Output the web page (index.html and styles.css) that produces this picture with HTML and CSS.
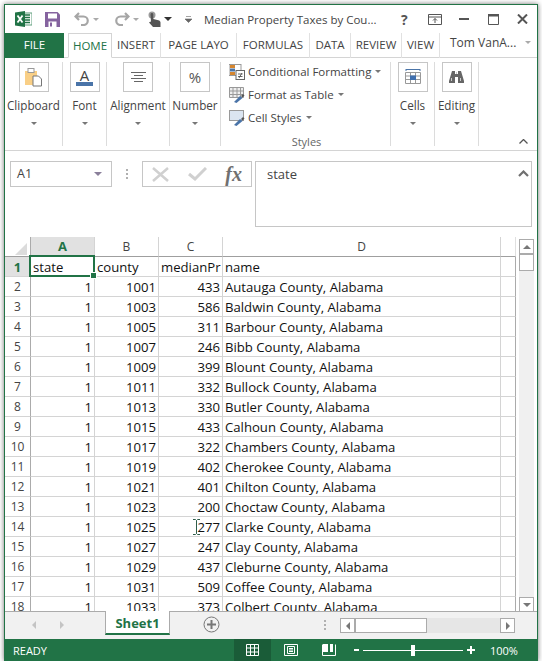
FILE: index.html
```html
<!DOCTYPE html>
<html>
<head>
    <title>Median Property Taxes by County</title>
    <meta charset="utf-8">
    <link rel="stylesheet" href="styles.css">
</head>

<body>
<div class="window">

    <!-- title bar -->
    <div class="titlebar">
        <svg class="qa logo" width="17" height="16" viewBox="0 0 17 16">
            <rect x="6" y="2" width="11" height="12" fill="#fff" stroke="#5f9e7c"/>
            <path d="M10 4h5M10 6.500h5M10 9h5M10 11.500h5" stroke="#217346" stroke-width="1.500"/>
            <path d="M0 1.500 10 0v16L0 14.500z" fill="#217346"/>
            <path d="M2.500 4.500 7.500 11.500M7.500 4.500 2.500 11.500" stroke="#fff" stroke-width="1.800"/>
        </svg>
        <svg class="qa save" width="15" height="15" viewBox="0 0 15 15">
            <path d="M0 0h12.500L15 2.500V15H0z" fill="#85639f"/>
            <rect x="3" y="1.500" width="9" height="5" fill="#fff"/>
            <rect x="3.500" y="9.500" width="8" height="5.500" fill="#fff"/>
            <rect x="5" y="10.500" width="2" height="4" fill="#85639f"/>
        </svg>
        <svg class="qa undo" width="16" height="14" viewBox="0 0 16 14">
            <path d="M5 1 1.500 4.500 5 8M2 4.500h7.500a4.200 4.200 0 0 1 0 8.500H7" fill="none" stroke="#a6a6a6" stroke-width="2.200"/>
        </svg>
        <span class="tiny-arrow light undo-arrow"></span>
        <svg class="qa redo" width="16" height="14" viewBox="0 0 16 14">
            <path d="M11 1l3.500 3.500L11 8M14 4.500H6.500a4.200 4.200 0 0 0 0 8.500H9" fill="none" stroke="#a6a6a6" stroke-width="2.200"/>
        </svg>
        <span class="tiny-arrow light redo-arrow"></span>
        <svg class="qa touch" width="13" height="16" viewBox="0 0 13 16">
            <circle cx="4" cy="4" r="3.500" fill="#9a9a9a"/>
            <path d="M2.500 3.500a1.300 1.300 0 0 1 2.800 0V8l5 1.200c1.500.4 2.200 1.200 2.200 2.300V16H5L1 11.500l1.500-1L3 11z" fill="#555"/>
        </svg>
        <span class="tiny-arrow dark touch-arrow"></span>
        <svg class="qa custom" width="7" height="7" viewBox="0 0 7 7">
            <path d="M1 0.500h5M0 3h7L3.500 6.500z" fill="#666" stroke="#666" stroke-width="0.600"/>
        </svg>
        <span class="doc-title">Median Property Taxes by Cou...</span>
        <span class="help">?</span>
        <svg class="qa display" width="14" height="11" viewBox="0 0 14 11">
            <path d="M.5.500h13v10H.500zM.5 3h13" fill="none" stroke="#555"/>
            <path d="M7 9V4.500M5 6.500l2-2 2 2" fill="none" stroke="#555"/>
        </svg>
        <svg class="qa minimize" width="10" height="2" viewBox="0 0 10 2"><rect width="10" height="2" fill="#555"/></svg>
        <svg class="qa maximize" width="11" height="11" viewBox="0 0 11 11">
            <path d="M.5 2h10v8.500H.500z" fill="none" stroke="#555"/><rect width="11" height="2" fill="#555"/>
        </svg>
        <svg class="qa close" width="11" height="10" viewBox="0 0 11 10">
            <path d="M1 .5l9 9M10 .5l-9 9" stroke="#555" stroke-width="2"/>
        </svg>
    </div>

    <!-- ribbon tabs -->
    <div class="tabs">
        <div class="tab tab-file">FILE</div>
        <div class="tab tab-home">HOME</div>
        <div class="tab w-insert">INSERT</div>
        <div class="tab w-page">PAGE LAYO</div>
        <div class="tab w-formulas">FORMULAS</div>
        <div class="tab w-data">DATA</div>
        <div class="tab w-review">REVIEW</div>
        <div class="tab w-view">VIEW</div>
        <div class="account">Tom VanA...<span class="tiny-arrow light"></span></div>
    </div>

    <!-- ribbon -->
    <div class="ribbon">
        <div class="group g-clipboard">
            <div class="big-icon">
                <svg width="17" height="19" viewBox="0 0 17 19">
                    <rect x="0" y="3" width="12" height="14" fill="#f9cf86"/>
                    <rect x="3" y="0.500" width="6" height="4" fill="#fff" stroke="#999"/>
                    <path d="M8 8h5.500L16.500 11v7H8z" fill="#fff" stroke="#777"/>
                </svg>
            </div>
            <div class="group-name">Clipboard</div>
            <span class="tiny-arrow mid"></span>
        </div>
        <div class="group g-font">
            <div class="big-icon">
                <svg width="17" height="18" viewBox="0 0 17 18">
                    <text x="8.500" y="13" class="icon-letter">A</text>
                    <rect y="14" width="17" height="4" fill="#4a74a8"/>
                </svg>
            </div>
            <div class="group-name">Font</div>
            <span class="tiny-arrow mid"></span>
        </div>
        <div class="group g-align">
            <div class="big-icon">
                <svg width="15" height="10" viewBox="0 0 15 10">
                    <path d="M0 .5h15M3 3.500h9M0 6.500h15M3 9.500h9" stroke="#666"/>
                </svg>
            </div>
            <div class="group-name">Alignment</div>
            <span class="tiny-arrow mid"></span>
        </div>
        <div class="group g-number">
            <div class="big-icon percent">%</div>
            <div class="group-name">Number</div>
            <span class="tiny-arrow mid"></span>
        </div>
        <div class="group g-styles">
            <div class="style-row">
                <svg width="16" height="16" viewBox="0 0 16 16">
                    <rect y="0.500" width="12" height="11" fill="#fff" stroke="#999"/>
                    <rect x="1" y="1" width="5" height="3" fill="#d6862f"/>
                    <rect x="1" y="4.500" width="5" height="3" fill="#4a74a8"/>
                    <rect x="1" y="8" width="5" height="3" fill="#d6862f"/>
                    <rect x="7" y="6.500" width="8.500" height="9" fill="#fff" stroke="#666"/>
                    <path d="M9 10h4.500M9 12.500h4.500M10 14l3-5" stroke="#444" stroke-width="0.800" fill="none"/>
                </svg>
                <span>Conditional Formatting</span><span class="tiny-arrow mid"></span>
            </div>
            <div class="style-row">
                <svg width="16" height="16" viewBox="0 0 16 16">
                    <path d="M.5.500h14v10H.5zM.5 4h14M.5 7.500h14M4 .5v10M8 .5v10M11.500.5v10" fill="#eee" stroke="#999"/>
                    <path d="M5 15l6-6 2.500 2-6 5z" fill="#4a74a8"/><path d="M12 9l2-2 1.500 1.500-2 2z" fill="#555"/>
                </svg>
                <span>Format as Table</span><span class="tiny-arrow mid"></span>
            </div>
            <div class="style-row">
                <svg width="16" height="16" viewBox="0 0 16 16">
                    <rect x=".5" y=".5" width="14" height="10" fill="#dbe5f1" stroke="#999"/>
                    <path d="M5 15l6-6 2.500 2-6 5z" fill="#4a74a8"/><path d="M12 9l2-2 1.500 1.500-2 2z" fill="#555"/>
                </svg>
                <span>Cell Styles</span><span class="tiny-arrow mid"></span>
            </div>
            <div class="group-name styles-name">Styles</div>
        </div>
        <div class="group g-cells">
            <div class="big-icon">
                <svg width="16" height="16" viewBox="0 0 16 16">
                    <path d="M1 .5h14M1 0v2M15 0v2" stroke="#4a74a8" fill="none"/>
                    <path d="M.5 3.500h15v11H.5zM.5 7h15M.5 10.500h15M5.500 3.500v11M10.500 3.500v11" fill="none" stroke="#999"/>
                    <rect x="5" y="6.500" width="6" height="4.500" fill="#3f6fae"/>
                </svg>
            </div>
            <div class="group-name">Cells</div>
            <span class="tiny-arrow mid"></span>
        </div>
        <div class="group g-editing">
            <div class="big-icon">
                <svg width="15" height="12" viewBox="0 0 15 12">
                    <path d="M3 0h3v3h3V0h3l3 10v2H9V6H6v6H0v-2z" fill="#666"/>
                    <path d="M2.500 7v3M11.500 7v3M7.500 1v2" stroke="#ccc"/>
                </svg>
            </div>
            <div class="group-name">Editing</div>
            <span class="tiny-arrow mid"></span>
        </div>
        <svg class="collapse" width="9" height="5" viewBox="0 0 9 5">
            <path d="M.5 4.500l4-4 4 4" fill="none" stroke="#555" stroke-width="1.300"/>
        </svg>
    </div>

    <!-- formula bar -->
    <div class="formula-bar">
        <div class="name-box">A1<span class="tiny-arrow name-arrow"></span></div>
        <div class="grip"></div>
        <div class="fx-box">
            <svg width="17" height="15" viewBox="0 0 17 15">
                <path d="M1 1l15 13M16 1 1 14" stroke="#d0d0d0" stroke-width="2.500"/>
            </svg>
            <svg width="19" height="14" viewBox="0 0 19 14">
                <path d="M1 7l6 5L18 1" fill="none" stroke="#d0d0d0" stroke-width="3"/>
            </svg>
            <span class="fx">fx</span>
        </div>
        <div class="formula-input">state
            <svg class="formula-chevron" width="11" height="7" viewBox="0 0 11 7">
                <path d="M1 6l4.500-4.500L10 6" fill="none" stroke="#707070" stroke-width="2.200"/>
            </svg>
        </div>
    </div>

    <!-- sheet -->
    <div class="sheet">
        <div class="grid">
            <table>
                <tr class="head">
                    <th class="corner"><span class="triangle"></span></th>
                    <th class="active">A</th><th>B</th><th>C</th><th>D</th><th></th>
                </tr>
                <tr><th class="active">1</th><td>state</td><td>county</td><td class="clip">medianPr</td><td>name</td><td></td></tr>
                <tr><th>2</th><td class="n">1</td><td class="n">1001</td><td class="n">433</td><td>Autauga County, Alabama</td><td></td></tr>
                <tr><th>3</th><td class="n">1</td><td class="n">1003</td><td class="n">586</td><td>Baldwin County, Alabama</td><td></td></tr>
                <tr><th>4</th><td class="n">1</td><td class="n">1005</td><td class="n">311</td><td>Barbour County, Alabama</td><td></td></tr>
                <tr><th>5</th><td class="n">1</td><td class="n">1007</td><td class="n">246</td><td>Bibb County, Alabama</td><td></td></tr>
                <tr><th>6</th><td class="n">1</td><td class="n">1009</td><td class="n">399</td><td>Blount County, Alabama</td><td></td></tr>
                <tr><th>7</th><td class="n">1</td><td class="n">1011</td><td class="n">332</td><td>Bullock County, Alabama</td><td></td></tr>
                <tr><th>8</th><td class="n">1</td><td class="n">1013</td><td class="n">330</td><td>Butler County, Alabama</td><td></td></tr>
                <tr><th>9</th><td class="n">1</td><td class="n">1015</td><td class="n">433</td><td>Calhoun County, Alabama</td><td></td></tr>
                <tr><th>10</th><td class="n">1</td><td class="n">1017</td><td class="n">322</td><td>Chambers County, Alabama</td><td></td></tr>
                <tr><th>11</th><td class="n">1</td><td class="n">1019</td><td class="n">402</td><td>Cherokee County, Alabama</td><td></td></tr>
                <tr><th>12</th><td class="n">1</td><td class="n">1021</td><td class="n">401</td><td>Chilton County, Alabama</td><td></td></tr>
                <tr><th>13</th><td class="n">1</td><td class="n">1023</td><td class="n">200</td><td>Choctaw County, Alabama</td><td></td></tr>
                <tr><th>14</th><td class="n">1</td><td class="n">1025</td><td class="n">277</td><td>Clarke County, Alabama</td><td></td></tr>
                <tr><th>15</th><td class="n">1</td><td class="n">1027</td><td class="n">247</td><td>Clay County, Alabama</td><td></td></tr>
                <tr><th>16</th><td class="n">1</td><td class="n">1029</td><td class="n">437</td><td>Cleburne County, Alabama</td><td></td></tr>
                <tr><th>17</th><td class="n">1</td><td class="n">1031</td><td class="n">509</td><td>Coffee County, Alabama</td><td></td></tr>
                <tr><th>18</th><td class="n">1</td><td class="n">1033</td><td class="n">373</td><td>Colbert County, Alabama</td><td></td></tr>
            </table>
            <div class="selection"><span class="handle"></span></div>
            <svg class="ibeam" width="7" height="16" viewBox="0 0 7 16">
                <path d="M0 .5h2.500l1 1 1-1H7M3.500 1.500v13M0 15.500h2.500l1-1 1 1H7" fill="none" stroke="#2f5d4a"/>
            </svg>
        </div>
        <div class="vscroll">
            <div class="sb-btn"><span class="arrow-up"></span></div>
            <div class="sb-thumb"></div>
            <div class="sb-track"></div>
            <div class="sb-btn"><span class="arrow-down"></span></div>
        </div>
    </div>

    <!-- sheet tabs -->
    <div class="sheet-tabs">
        <span class="nav-arrow nav-left"></span>
        <span class="nav-arrow nav-right"></span>
        <div class="sheet-tab">Sheet1</div>
        <svg class="add-sheet" width="17" height="17" viewBox="0 0 17 17">
            <circle cx="8.500" cy="8.500" r="7.500" fill="none" stroke="#777"/>
            <path d="M8.500 4v9M4 8.500h9" stroke="#777" stroke-width="2"/>
        </svg>
        <div class="grip grip-h"></div>
        <div class="hscroll">
            <div class="sb-btn-h"><span class="arrow-left"></span></div>
            <div class="sb-thumb-h"></div>
            <div class="sb-track-h"></div>
            <div class="sb-btn-h"><span class="arrow-right"></span></div>
        </div>
    </div>

    <!-- status bar -->
    <div class="statusbar">
        <span class="ready">READY</span>
        <div class="view-active">
            <svg width="13" height="12" viewBox="0 0 13 12">
                <path d="M.5.500h12v11H.5zM.5 4h12M.5 8h12M4.500.5v11M8.500.5v11" fill="none" stroke="#fff"/>
            </svg>
        </div>
        <svg class="view-page" width="14" height="12" viewBox="0 0 14 12">
            <path d="M.5.500h13v11H.5z" fill="none" stroke="#fff"/>
            <path d="M3.500 2.500h7v7h-7zM5 4.500h4M5 6h4M5 7.500h4" fill="none" stroke="#fff"/>
        </svg>
        <svg class="view-break" width="14" height="12" viewBox="0 0 14 12">
            <path d="M.5.500v11h13V.5" fill="none" stroke="#fff"/>
            <rect x="1" y="0" width="5" height="8" fill="#fff"/><rect x="8" y="0" width="3" height="8" fill="#fff"/>
        </svg>
        <span class="zoom-minus"></span>
        <div class="zoom-slider"><span class="zoom-knob"></span></div>
        <span class="zoom-plus"></span>
        <span class="zoom-value">100%</span>
    </div>

</div>
</body>
</html>
```

FILE: styles.css
```css
html, body {
    margin: 0;
    padding: 0;
    background-color: white;
}

body {
    font-family: "Open Sans", "Noto Sans", sans-serif;
    color: #444;
    overflow: hidden;
}

.window {
    box-sizing: border-box;
    width: 534px;
    height: 657px;
    margin: 4px 0 0 4px;
    border: 1px solid #217346;
    border-bottom: none;
    background-color: white;
    box-shadow: 0 0 5px rgba(0, 0, 0, 0.55);
    display: flex;
    flex-direction: column;
}

/* shared small arrows */
.tiny-arrow {
    display: inline-block;
    width: 0;
    height: 0;
    border-left: 3px solid transparent;
    border-right: 3px solid transparent;
    border-top: 3px solid #777;
}

.tiny-arrow.light {
    border-top-color: #aaa;
}

.tiny-arrow.dark {
    border-left-width: 4px;
    border-right-width: 4px;
    border-top: 4px solid #333;
}

/* title bar */
.titlebar {
    height: 28px;
    flex: none;
    display: flex;
    align-items: center;
    font-size: 11.5px;
}

.logo { margin-left: 10px; }
.save { margin-left: 13px; }
.undo { margin-left: 14px; }
.undo-arrow { margin-left: 3px; }
.redo { margin-left: 15px; }
.redo-arrow { margin-left: 3px; }
.touch { margin-left: 9px; }
.touch-arrow { margin-left: 3px; }
.custom { margin-left: 13px; }

.doc-title {
    margin-left: 12px;
    width: 197px;
    white-space: nowrap;
    color: #444;
}

.help {
    width: 14px;
    font-size: 14px;
    font-weight: 700;
    color: #555;
}

.display { margin-left: 13px; }
.minimize { margin-left: 17px; }
.maximize { margin-left: 19px; }
.close { margin-left: 18px; }

/* ribbon tabs */
.tabs {
    height: 25px;
    flex: none;
    box-sizing: border-box;
    border-bottom: 1px solid #d4d4d4;
    display: flex;
    font-size: 11.5px;
}

.tab {
    box-sizing: border-box;
    height: 25px;
    line-height: 24px;
    text-align: center;
    border-right: 1px solid #e1e1e1;
    white-space: nowrap;
}

.tab-file {
    width: 59px;
    margin-right: 4px;
    background-color: #217346;
    color: white;
    border: none;
}

.tab-home {
    width: 44px;
    color: #217346;
    background-color: white;
    border: 1px solid #d4d4d4;
    border-bottom: 1px solid white;
}

.w-insert { width: 49px; }
.w-page { width: 76px; }
.w-formulas { width: 73px; }
.w-data { width: 41px; }
.w-review { width: 51px; }
.w-view { width: 38px; }

.account {
    margin-left: 10px;
    margin-top: -2px;
    font-size: 12px;
    line-height: 24px;
    white-space: nowrap;
}

.account .tiny-arrow {
    margin-left: 9px;
    vertical-align: 3px;
}

/* ribbon */
.ribbon {
    position: relative;
    height: 93px;
    flex: none;
    box-sizing: border-box;
    border-bottom: 1px solid #d4d4d4;
    padding-top: 4px;
    display: flex;
    font-size: 11.7px;
}

.group {
    box-sizing: border-box;
    height: 84px;
    border-right: 1px solid #dcdcdc;
    display: flex;
    flex-direction: column;
    align-items: center;
}

.g-clipboard { width: 58px; }
.g-font { width: 44px; }
.g-align { width: 63px; }
.g-number { width: 51px; }
.g-styles { width: 170px; align-items: flex-start; padding-left: 8px; }
.g-cells { width: 44px; }
.g-editing { width: 44px; }

.big-icon {
    box-sizing: border-box;
    width: 30px;
    height: 30px;
    flex: none;
    border: 1px solid #c6c6c6;
    display: flex;
    align-items: center;
    justify-content: center;
}

.percent {
    font-size: 15px;
    color: #555;
}

.icon-letter {
    font-family: "Open Sans", sans-serif;
    font-size: 15px;
    fill: #444;
    text-anchor: middle;
}

.group-name {
    margin-top: 5px;
    line-height: 16px;
    white-space: nowrap;
}

.group .tiny-arrow {
    margin-top: 9px;
}

.style-row {
    height: 23px;
    flex: none;
    display: flex;
    align-items: center;
    white-space: nowrap;
    font-size: 11.5px;
}

.style-row:first-child {
    margin-top: -2px;
}

.style-row svg {
    margin-right: 3px;
}

.style-row .tiny-arrow {
    margin: 0 0 0 4px;
}

.styles-name {
    margin: 5px 0 0 -6px;
    align-self: center;
    font-size: 11px;
    color: #666;
}

.collapse {
    position: absolute;
    right: 9px;
    bottom: 6px;
}

/* formula bar */
.formula-bar {
    height: 86px;
    flex: none;
    box-sizing: border-box;
    padding: 10px 5px 0 5px;
    display: flex;
    align-items: flex-start;
    font-size: 12.5px;
}

.name-box {
    box-sizing: border-box;
    width: 102px;
    height: 26px;
    border: 1px solid #c6c6c6;
    padding: 0 6px;
    line-height: 24px;
    display: flex;
    align-items: center;
    justify-content: space-between;
}

.name-arrow {
    border-left-width: 4px;
    border-right-width: 4px;
    border-top: 4px solid #8a7f9a;
    margin-right: 3px;
}

.grip {
    width: 2px;
    height: 10px;
    margin: 8px 14px 0 14px;
    flex: none;
    background-image: repeating-linear-gradient(to bottom, #b0b0b0 0, #b0b0b0 2px, transparent 2px, transparent 4px);
}

.fx-box {
    box-sizing: border-box;
    width: 110px;
    height: 26px;
    border: 1px solid #c6c6c6;
    padding: 0 9px 0 9px;
    display: flex;
    align-items: center;
    justify-content: space-between;
}

.fx {
    font-family: "Liberation Serif", serif;
    font-style: italic;
    font-weight: 700;
    font-size: 20px;
    line-height: 20px;
    color: #707070;
}

.formula-input {
    position: relative;
    box-sizing: border-box;
    width: 277px;
    height: 66px;
    margin-left: 3px;
    border: 1px solid #c6c6c6;
    padding: 3px 11px;
    font-size: 13px;
    line-height: 18px;
}

.formula-chevron {
    position: absolute;
    right: 2px;
    top: 8px;
}

/* sheet */
.sheet {
    height: 374px;
    flex: none;
    display: flex;
    overflow: hidden;
}

.grid {
    position: relative;
    width: 511px;
    flex: none;
    font-size: 13.15px;
}

table {
    table-layout: fixed;
    width: 511px;
    border-collapse: separate;
    border-spacing: 0;
}

th, td {
    box-sizing: border-box;
    height: 20px;
    padding: 1px 2px 0;
    border-right: 1px solid #d4d4d4;
    border-bottom: 1px solid #d4d4d4;
    overflow: hidden;
    white-space: nowrap;
    text-align: left;
    color: #111;
    line-height: 18px;
}

th:first-child { width: 26px; border-right-color: #ababab; }
th:nth-child(2) { width: 64px; }
tr.head th:nth-child(3), tr.head th:nth-child(4) { width: 64px; }
tr.head th:nth-child(5) { width: 278px; }
tr.head th:nth-child(6) { width: 15px; }

tr.head th {
    padding: 0 2px;
    line-height: 19px;
    font-size: 12px;
    font-weight: 400;
    text-align: center;
    color: #444;
    border-bottom-color: #9f9f9f;
}

tr.head th:last-child {
    border-right: 1px solid #e0e0e0;
    border-bottom-color: #9f9f9f;
}

td:last-child {
    border-right-color: #ababab;
}

th {
    font-size: 12px;
    font-weight: 400;
    text-align: center;
    color: #444;
}

th.active, tr.head th.active {
    background-color: #e1e1e1;
    color: #217346;
    font-weight: 700;
    font-size: 13px;
}

.corner {
    position: relative;
}

.triangle {
    position: absolute;
    right: 3px;
    bottom: 1px;
    width: 0;
    height: 0;
    border-left: 12px solid transparent;
    border-bottom: 12px solid #dcdcdc;
}

td.n {
    text-align: right;
    padding-right: 2px;
}

td.clip {
    overflow: hidden;
}

.selection {
    position: absolute;
    left: 24px;
    top: 18px;
    width: 66px;
    height: 22px;
    box-sizing: border-box;
    border: 2px solid #217346;
}

.handle {
    position: absolute;
    right: -4px;
    bottom: -4px;
    width: 5px;
    height: 5px;
    border: 1px solid white;
    background-color: #217346;
}

.ibeam {
    position: absolute;
    left: 188px;
    top: 282px;
}

/* scrollbars */
.vscroll {
    width: 15px;
    margin: 2px 0 0 3px;
    height: 374px;
    display: flex;
    flex-direction: column;
    background-color: #f0f0f0;
}

.sb-btn {
    box-sizing: border-box;
    height: 15px;
    flex: none;
    border: 1px solid #ababab;
    background-color: white;
    display: flex;
    align-items: center;
    justify-content: center;
}

.sb-thumb {
    box-sizing: border-box;
    height: 17px;
    flex: none;
    border: 1px solid #ababab;
    background-color: white;
}

.sb-track {
    height: 326px;
    flex: none;
}

.arrow-up, .arrow-down {
    width: 0;
    height: 0;
    border-left: 4px solid transparent;
    border-right: 4px solid transparent;
}

.arrow-up { border-bottom: 4px solid #777; }
.arrow-down { border-top: 4px solid #777; }

.arrow-left, .arrow-right {
    width: 0;
    height: 0;
    border-top: 4px solid transparent;
    border-bottom: 4px solid transparent;
}

.arrow-left { border-right: 4px solid #777; }
.arrow-right { border-left: 4px solid #777; }

/* sheet tabs */
.sheet-tabs {
    height: 28px;
    flex: none;
    box-sizing: border-box;
    border-top: 1px solid #ababab;
    background-color: #f1f1f1;
    display: flex;
    align-items: flex-start;
}

.nav-arrow {
    width: 0;
    height: 0;
    margin-top: 9px;
    border-top: 4px solid transparent;
    border-bottom: 4px solid transparent;
}

.nav-left {
    margin-left: 27px;
    border-right: 4px solid #c4c4c4;
}

.nav-right {
    margin-left: 24px;
    border-left: 4px solid #c4c4c4;
}

.sheet-tab {
    box-sizing: border-box;
    width: 65px;
    height: 24px;
    margin: -1px 0 0 41px;
    border-left: 1px solid #ababab;
    border-right: 1px solid #ababab;
    border-bottom: 2px solid #217346;
    background-color: white;
    color: #217346;
    font-size: 13px;
    font-weight: 700;
    text-align: center;
    line-height: 24px;
}

.add-sheet {
    margin: 4px 0 0 33px;
    flex: none;
}

.grip-h {
    margin: 8px 0 0 104px;
}

.hscroll {
    width: 175px;
    height: 15px;
    margin: 6px 0 0 14px;
    display: flex;
    background-color: #e6e6e6;
}

.sb-btn-h {
    box-sizing: border-box;
    width: 15px;
    flex: none;
    border: 1px solid #ababab;
    background-color: white;
    display: flex;
    align-items: center;
    justify-content: center;
}

.sb-thumb-h {
    box-sizing: border-box;
    width: 72px;
    flex: none;
    border: 1px solid #ababab;
    background-color: white;
}

.sb-track-h {
    flex: 1;
}

/* status bar */
.statusbar {
    height: 22px;
    flex: none;
    background-color: #217346;
    color: white;
    font-size: 11px;
    display: flex;
    align-items: center;
}

.ready {
    width: 229px;
    padding-left: 8px;
    box-sizing: border-box;
}

.view-active {
    width: 37px;
    height: 22px;
    background-color: #1a5c38;
    display: flex;
    align-items: center;
    justify-content: center;
}

.view-page { margin-left: 13px; }
.view-break { margin-left: 24px; }

.zoom-minus {
    width: 5px;
    height: 2px;
    margin-left: 18px;
    background-color: white;
}

.zoom-slider {
    position: relative;
    width: 100px;
    height: 1px;
    margin-left: 4px;
    background-color: white;
}

.zoom-knob {
    position: absolute;
    left: 48px;
    top: -5px;
    width: 4px;
    height: 11px;
    background-color: white;
}

.zoom-plus {
    position: relative;
    width: 8px;
    height: 2px;
    margin-left: 4px;
    background-color: white;
}

.zoom-plus::after {
    content: "";
    position: absolute;
    left: 3px;
    top: -3px;
    width: 2px;
    height: 8px;
    background-color: white;
}

.zoom-value {
    margin-left: 15px;
}
```
